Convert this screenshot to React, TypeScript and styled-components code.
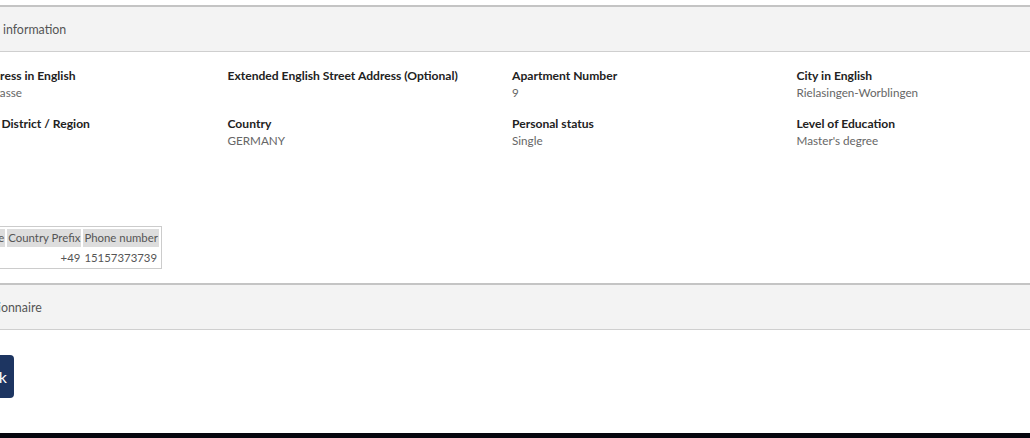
import React from "react";
import styled, { createGlobalStyle } from "styled-components";

const GlobalStyle = createGlobalStyle`
  html, body {
    margin: 0;
    padding: 0;
    background: #ffffff;
    overflow: hidden;
  }
  body {
    font-family: "Source Sans Pro", Lato, "Noto Sans", sans-serif;
    color: #333;
  }
`;

const Page = styled.div`
  width: 1180px;
  margin-left: -72px;
  padding-top: 5px;
  display: flex;
  flex-direction: column;
`;

const SectionHeader = styled.div`
  height: 47px;
  box-sizing: border-box;
  display: flex;
  align-items: center;
  padding: 0 16px;
  background: #f3f3f3;
  border-top: 2px solid #c4c4c4;
  border-bottom: 1px solid #cfcfcf;
  font-size: 12.4px;
  color: #555;
`;

const SectionBody = styled.div`
  padding: 16px 15px 14px;
  display: flex;
  flex-direction: column;
`;

const FieldGrid = styled.div`
  display: grid;
  grid-template-columns: repeat(4, 284.5px);
  row-gap: 16px;
`;

const Field = styled.div`
  display: flex;
  flex-direction: column;
`;

const Label = styled.div`
  font-size: 12.1px;
  line-height: 16px;
  font-weight: 700;
  color: #222;
`;

const Value = styled.div`
  font-size: 11.7px;
  line-height: 16px;
  min-height: 16px;
  color: #666;
`;

const PhoneTable = styled.table`
  margin-top: 78px;
  border: 1px solid #cccccc;
  border-spacing: 2px;
  font-size: 11.4px;
  align-self: flex-start;
`;

const Th = styled.th`
  background: #dddddd;
  font-weight: 400;
  color: #555;
  padding: 0 1px;
  line-height: 18px;
  text-align: left;
  white-space: nowrap;
`;

const Td = styled.td<{ $right?: boolean }>`
  color: #555;
  padding: 0 1px;
  line-height: 17px;
  text-align: ${(p) => (p.$right ? "right" : "left")};
`;

const ButtonArea = styled.div`
  padding: 25px 15px 35px;
  display: flex;
`;

const BackButton = styled.button`
  height: 43px;
  display: flex;
  align-items: center;
  gap: 6px;
  padding: 0 7px 0 10px;
  border: none;
  border-radius: 4px;
  background: #1d3561;
  color: #fff;
  font-family: inherit;
  font-size: 16px;
`;

const Footer = styled.div`
  height: 10px;
  background: #06060e;
`;

const fields = [
  { label: "Street Address in English", value: "Bahnhofstrasse" },
  { label: "Extended English Street Address (Optional)", value: "" },
  { label: "Apartment Number", value: "9" },
  { label: "City in English", value: "Rielasingen-Worblingen" },
  { label: "Province / District / Region", value: "" },
  { label: "Country", value: "GERMANY" },
  { label: "Personal status", value: "Single" },
  { label: "Level of Education", value: "Master's degree" },
];

export default function App() {
  return (
    <>
      <GlobalStyle />
      <Page>
        <SectionHeader>Additional information</SectionHeader>
        <SectionBody>
          <FieldGrid>
            {fields.map((f) => (
              <Field key={f.label}>
                <Label>{f.label}</Label>
                <Value>{f.value}</Value>
              </Field>
            ))}
          </FieldGrid>
          <PhoneTable>
            <thead>
              <tr>
                <Th>Phone type</Th>
                <Th>Country Prefix</Th>
                <Th>Phone number</Th>
              </tr>
            </thead>
            <tbody>
              <tr>
                <Td>Mobile</Td>
                <Td $right>+49</Td>
                <Td>15157373739</Td>
              </tr>
            </tbody>
          </PhoneTable>
        </SectionBody>
        <SectionHeader>My Questionnaire</SectionHeader>
        <ButtonArea>
          <BackButton>
            <svg width="14" height="14" viewBox="0 0 24 24" fill="none" stroke="currentColor" strokeWidth="2.5" strokeLinecap="round" strokeLinejoin="round">
              <path d="M15 18l-6-6 6-6" />
            </svg>
            Back
          </BackButton>
        </ButtonArea>
        <Footer />
      </Page>
    </>
  );
}
